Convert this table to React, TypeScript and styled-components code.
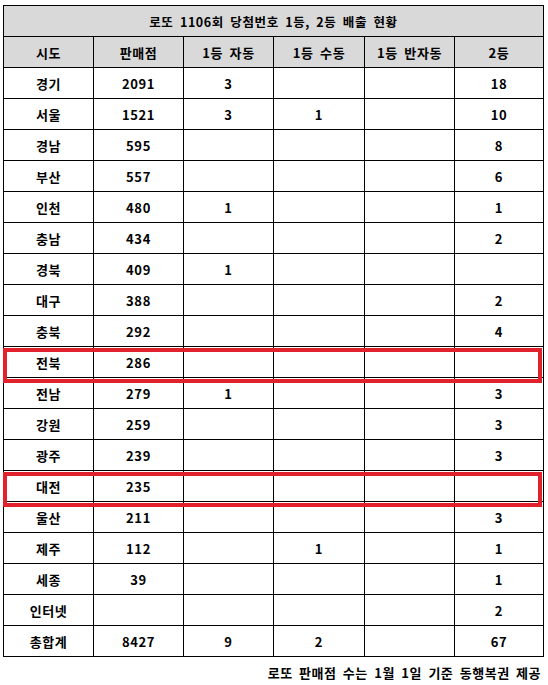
import styled, { createGlobalStyle, css } from 'styled-components'

const GlobalStyle = createGlobalStyle`
  body {
    margin: 0;
    background: #fff;
    font-family: 'Malgun Gothic', 'Noto Sans CJK KR', sans-serif;
    color: #000;
  }
`

const COLS = '90px 90px 90px 91px 90px 89px'

const Page = styled.div`
  width: 548px;
  height: 685px;
  padding: 5px 0 0 3px;
  box-sizing: border-box;
`

const Sheet = styled.div`
  width: 541px;
  border-top: 1px solid #000;
  border-left: 1px solid #000;
  box-sizing: border-box;
`

const Title = styled.div`
  height: 31px;
  box-sizing: border-box;
  border-right: 1px solid #000;
  border-bottom: 1px solid #000;
  background: #d9d9d9;
  display: flex;
  align-items: center;
  justify-content: center;
  font-size: 12.5px;
  font-weight: 700;
  letter-spacing: 0.6px;
  word-spacing: 3px;
`

const Row = styled.div<{ $head?: boolean; $mark?: boolean }>`
  position: relative;
  display: grid;
  grid-template-columns: ${COLS};
  background: ${(p) => (p.$head ? '#d9d9d9' : '#fff')};
  ${(p) =>
    p.$mark &&
    css`
      z-index: 2;
      &::after {
        content: '';
        position: absolute;
        left: -1px;
        right: 2px;
        top: 1px;
        bottom: -5px;
        border: 4.5px solid #e1222d;
        pointer-events: none;
      }
    `}
`

const Cell = styled.div`
  height: 31px;
  box-sizing: border-box;
  border-right: 1px solid #000;
  border-bottom: 1px solid #000;
  display: flex;
  align-items: center;
  justify-content: center;
  font-size: 13px;
  font-weight: 700;
  letter-spacing: 0.6px;
  word-spacing: 3px;
`

const Note = styled.div`
  margin-top: 6px;
  width: 538px;
  text-align: right;
  font-size: 13px;
  font-weight: 700;
  letter-spacing: 0.5px;
  word-spacing: 3px;
`

const heads = ['시도', '판매점', '1등 자동', '1등 수동', '1등 반자동', '2등']

const rows: { name: string; vals: string[]; mark?: boolean }[] = [
  { name: '경기', vals: ['2091', '3', '', '', '18'] },
  { name: '서울', vals: ['1521', '3', '1', '', '10'] },
  { name: '경남', vals: ['595', '', '', '', '8'] },
  { name: '부산', vals: ['557', '', '', '', '6'] },
  { name: '인천', vals: ['480', '1', '', '', '1'] },
  { name: '충남', vals: ['434', '', '', '', '2'] },
  { name: '경북', vals: ['409', '1', '', '', ''] },
  { name: '대구', vals: ['388', '', '', '', '2'] },
  { name: '충북', vals: ['292', '', '', '', '4'] },
  { name: '전북', vals: ['286', '', '', '', ''], mark: true },
  { name: '전남', vals: ['279', '1', '', '', '3'] },
  { name: '강원', vals: ['259', '', '', '', '3'] },
  { name: '광주', vals: ['239', '', '', '', '3'] },
  { name: '대전', vals: ['235', '', '', '', ''], mark: true },
  { name: '울산', vals: ['211', '', '', '', '3'] },
  { name: '제주', vals: ['112', '', '1', '', '1'] },
  { name: '세종', vals: ['39', '', '', '', '1'] },
  { name: '인터넷', vals: ['', '', '', '', '2'] },
  { name: '총합계', vals: ['8427', '9', '2', '', '67'] },
]

export default function App() {
  return (
    <Page>
      <GlobalStyle />
      <Sheet>
        <Title>로또 1106회 당첨번호 1등, 2등 배출 현황</Title>
        <Row $head>
          {heads.map((h) => (
            <Cell key={h}>{h}</Cell>
          ))}
        </Row>
        {rows.map((r) => (
          <Row key={r.name} $mark={r.mark}>
            <Cell>{r.name}</Cell>
            {r.vals.map((v, i) => (
              <Cell key={i}>{v}</Cell>
            ))}
          </Row>
        ))}
      </Sheet>
      <Note>로또 판매점 수는 1월 1일 기준 동행복권 제공</Note>
    </Page>
  )
}
